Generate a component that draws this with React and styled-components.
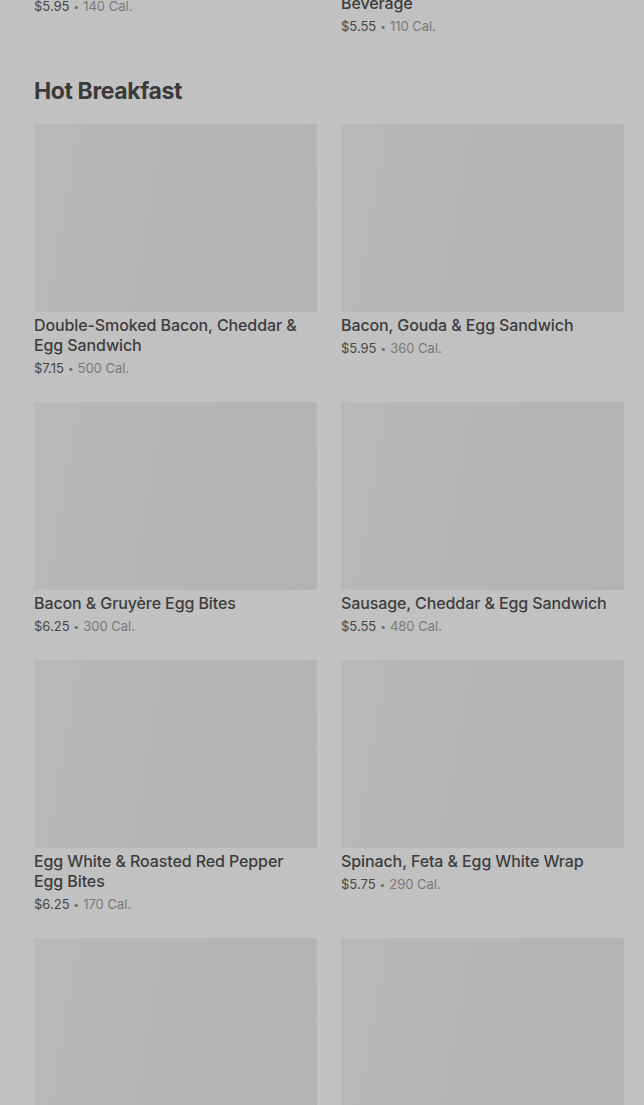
import styled, { createGlobalStyle } from "styled-components";

const GlobalStyle = createGlobalStyle`
  html, body {
    margin: 0;
    padding: 0;
    background: #c1c1c1;
    overflow: hidden;
  }
  body {
    font-family: Inter, "Noto Sans", "Liberation Sans", sans-serif;
    -webkit-font-smoothing: antialiased;
  }
`;

const prevItems = [
  { name: "Caramel Macchiato", price: "$5.95", cal: "140 Cal." },
  { name: "Mango Dragonfruit Refreshers® Beverage", price: "$5.55", cal: "110 Cal." },
];

const breakfast = [
  { name: "Double-Smoked Bacon, Cheddar & Egg Sandwich", price: "$7.15", cal: "500 Cal." },
  { name: "Bacon, Gouda & Egg Sandwich", price: "$5.95", cal: "360 Cal." },
  { name: "Bacon & Gruyère Egg Bites", price: "$6.25", cal: "300 Cal." },
  { name: "Sausage, Cheddar & Egg Sandwich", price: "$5.55", cal: "480 Cal." },
  { name: "Egg White & Roasted Red Pepper Egg Bites", price: "$6.25", cal: "170 Cal." },
  { name: "Spinach, Feta & Egg White Wrap", price: "$5.75", cal: "290 Cal." },
  { name: "Impossible™ Breakfast Sandwich", price: "$6.45", cal: "420 Cal." },
  { name: "Turkey Bacon, Cheddar & Egg White Sandwich", price: "$5.95", cal: "230 Cal." },
];

export default function App() {
  return (
    <>
      <GlobalStyle />
      <Page>
        <Grid>
          {prevItems.map((item) => (
            <MenuCard key={item.name} item={item} />
          ))}
        </Grid>
        <Section>
          <SectionTitle>Hot Breakfast</SectionTitle>
          <Grid>
            {breakfast.map((item) => (
              <MenuCard key={item.name} item={item} />
            ))}
          </Grid>
        </Section>
      </Page>
    </>
  );
}

const MenuCard = ({ item }) => (
  <Card>
    <Thumb />
    <Name>{item.name}</Name>
    <Meta>
      <Price>{item.price}</Price>
      <Dot>•</Dot>
      <Cal>{item.cal}</Cal>
    </Meta>
  </Card>
);

// styled components
const Page = styled.div`
  margin-top: -218px;
  padding: 0 20px 0 34px;
`;

const Section = styled.section`
  padding-top: 41px;
`;

const SectionTitle = styled.h2`
  margin: 0 0 19px;
  font-size: 23px;
  line-height: 28px;
  font-weight: 700;
  letter-spacing: -0.4px;
  color: #3a3a3a;
`;

const Grid = styled.div`
  display: grid;
  grid-template-columns: 1fr 1fr;
  column-gap: 24px;
  row-gap: 24px;
  align-items: start;
`;

const Card = styled.div`
  display: flex;
  flex-direction: column;
`;

const Thumb = styled.div`
  height: 188px;
  background: linear-gradient(100deg, #b9b9b9 0%, #b5b5b5 45%, #b3b3b3 100%);
  margin-bottom: 3px;
`;

const Name = styled.div`
  font-size: 16px;
  line-height: 20px;
  font-weight: 500;
  letter-spacing: -0.1px;
  color: #3d3d3d;
  padding-right: 12px;
`;

const Meta = styled.div`
  display: flex;
  align-items: center;
  gap: 4px;
  margin-top: 3px;
  font-size: 13px;
  line-height: 20px;
`;

const Price = styled.span`
  color: #474747;
`;

const Dot = styled.span`
  color: #6d6d6d;
  font-size: 10px;
`;

const Cal = styled.span`
  color: #7a7a7a;
`;
